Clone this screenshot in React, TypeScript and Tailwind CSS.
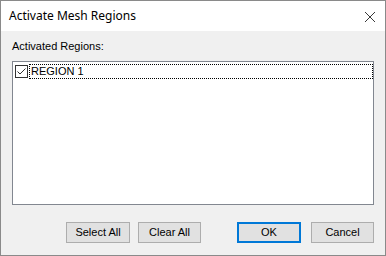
import React, { useState } from 'react';

const uiFont = { fontFamily: '"Liberation Sans", Arial, sans-serif' };

const DialogButton: React.FC<{ label: string; width: string; primary?: boolean }> = ({ label, width, primary }) => (
  <button
    type="button"
    className={`h-[21px] ${width} bg-[#e1e1e1] text-[11px] leading-none text-black ${
      primary ? 'border-2 border-[#0078d7]' : 'border border-[#adadad]'
    }`}
  >
    {label}
  </button>
);

export default function App() {
  const [checked, setChecked] = useState(true);

  return (
    <div className="w-[386px] h-[256px] border border-[#8a8a8a] flex flex-col bg-[#f0f0f0]" style={uiFont}>
      <div className="h-[30px] bg-white flex items-center justify-between pl-[8px] pr-[9px]">
        <span className="text-[12px] text-black" style={{ fontFamily: '"Noto Sans", "Segoe UI", sans-serif' }}>
          Activate Mesh Regions
        </span>
        <svg width="12" height="12" viewBox="0 0 12 12" className="mt-[1px]">
          <path d="M1 1 L11 11 M11 1 L1 11" stroke="#222" strokeWidth="0.9" fill="none" />
        </svg>
      </div>
      <div className="flex-1 flex flex-col px-[11px] pt-[9px]">
        <div className="h-[13px] text-[11px] leading-[13px] text-black">Activated Regions:</div>
        <div className="mt-[8px] h-[144px] bg-white border border-[#828790] pl-[2px] pt-[2px]">
          <label className="flex items-center h-[15px] cursor-default">
            <span
              className="w-[13px] h-[13px] border border-[#333] bg-white flex items-center justify-center"
              onClick={() => setChecked((c) => !c)}
            >
              {checked && (
                <svg width="11" height="11" viewBox="0 0 11 11">
                  <path d="M1.5 5.5 L4 8 L9.5 2.5" stroke="#333" strokeWidth="1" fill="none" />
                </svg>
              )}
            </span>
            <span className="ml-[1px] flex-1 h-[15px] border border-dotted border-black text-[11px] leading-[13px] text-black pl-[1px]">
              REGION 1
            </span>
          </label>
        </div>
        <div className="mt-[17px] flex items-center justify-end">
          <DialogButton label="Select All" width="w-[64px]" />
          <div className="w-[8px]" />
          <DialogButton label="Clear All" width="w-[63px]" />
          <div className="w-[36px]" />
          <DialogButton label="OK" width="w-[64px]" primary />
          <div className="w-[10px]" />
          <DialogButton label="Cancel" width="w-[63px]" />
        </div>
      </div>
    </div>
  );
}
